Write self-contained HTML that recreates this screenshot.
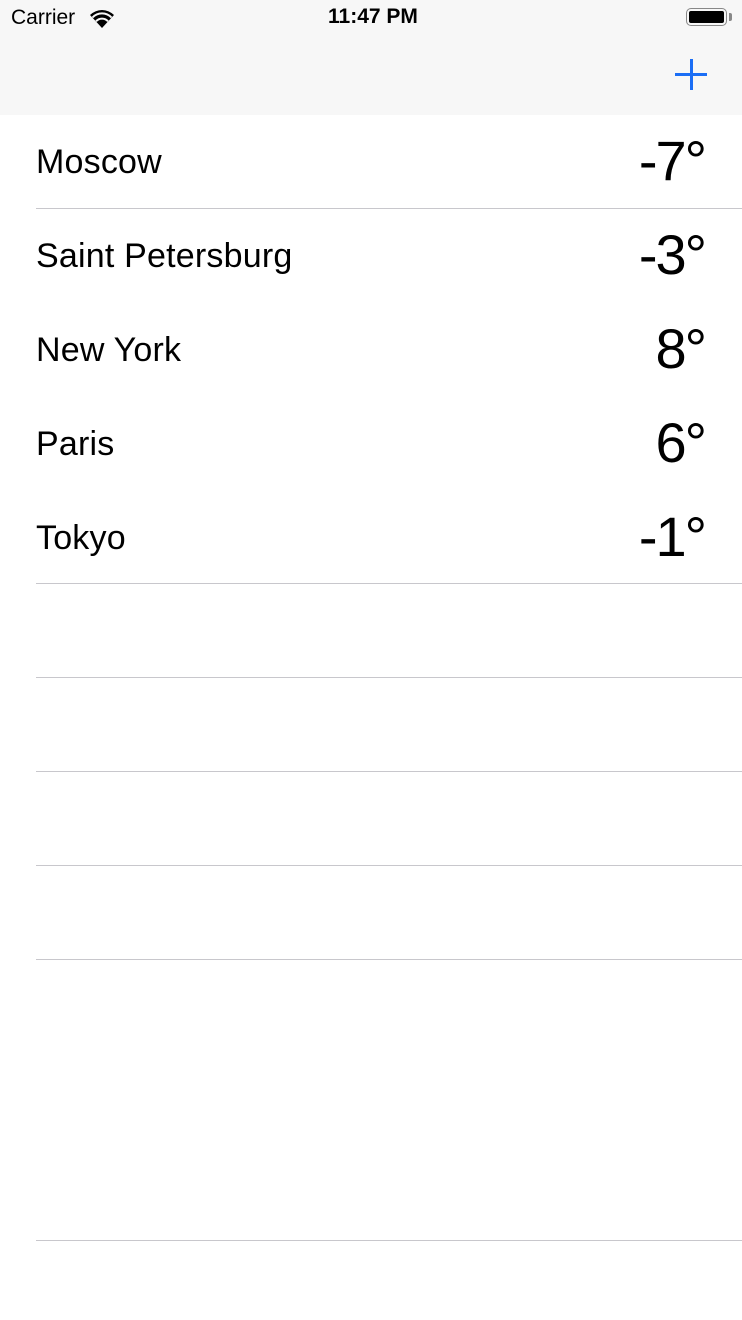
<!DOCTYPE html>
<html><head><style>
body{margin:0;width:742px;height:1320px;background:#fff;font-family:"Liberation Sans",sans-serif;position:relative;overflow:hidden}
.nav{position:absolute;left:0;top:0;width:742px;height:115px;background:#f7f7f7}
.t{position:absolute;white-space:nowrap}
.sep{position:absolute;left:36px;right:0;height:1px;background:#c8c7cc}
.city{position:absolute;left:36px;font-size:34px;color:#000;line-height:40px;letter-spacing:0.2px}
.temp{position:absolute;right:37px;font-size:56px;color:#000;line-height:60px;letter-spacing:-2px}
</style></head><body>
<div class="nav">
<div class="t" style="left:11px;top:6px;font-size:21px">Carrier</div>
<svg style="position:absolute;left:88px;top:9px" width="28" height="20" viewBox="0 0 28 20"><path d="M14 19 L2 6 A17 17 0 0 1 26 6 Z" fill="#000"/><path d="M4.5 8.5 A13 13 0 0 1 23.5 8.5" stroke="#f7f7f7" stroke-width="2" fill="none"/><path d="M8 12.3 A8 8 0 0 1 20 12.3" stroke="#f7f7f7" stroke-width="2" fill="none"/></svg>
<div class="t" style="left:328px;top:5px;font-size:21px;font-weight:bold">11:47 PM</div>
<div style="position:absolute;left:686px;top:8px;width:41px;height:18px;border:1.5px solid #888;border-radius:5px;box-sizing:border-box"><div style="position:absolute;left:2px;top:2px;right:2px;bottom:2px;background:#000;border-radius:2px"></div></div>
<div style="position:absolute;left:729px;top:13px;width:3px;height:8px;background:#888;border-radius:0 2px 2px 0"></div>
<div style="position:absolute;left:675px;top:73px;width:32px;height:3px;background:#1b6ef5"></div>
<div style="position:absolute;left:690px;top:59px;width:3px;height:31px;background:#1b6ef5"></div>
</div>
<div class="city" style="top:142px">Moscow</div><div class="temp" style="top:131px">-7°</div>
<div class="sep" style="top:208px"></div>
<div class="city" style="top:236px">Saint Petersburg</div><div class="temp" style="top:225px">-3°</div>
<div class="city" style="top:330px">New York</div><div class="temp" style="top:319px">8°</div>
<div class="city" style="top:424px">Paris</div><div class="temp" style="top:413px">6°</div>
<div class="city" style="top:518px">Tokyo</div><div class="temp" style="top:507px">-1°</div>
<div class="sep" style="top:583px"></div>
<div class="sep" style="top:677px"></div>
<div class="sep" style="top:771px"></div>
<div class="sep" style="top:865px"></div>
<div class="sep" style="top:959px"></div>
<div class="sep" style="top:1240px"></div>
</body></html>
